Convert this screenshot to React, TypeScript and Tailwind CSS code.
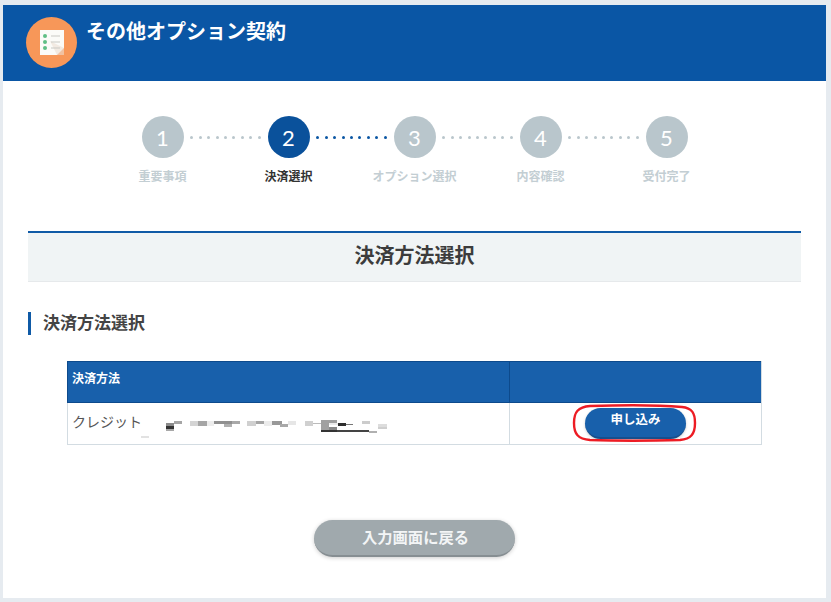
import * as React from 'react';

const font = { fontFamily: '"Lato", "Noto Sans CJK JP", sans-serif' };

const steps = [
  { no: 1, label: '重要事項' },
  { no: 2, label: '決済選択' },
  { no: 3, label: 'オプション選択' },
  { no: 4, label: '内容確認' },
  { no: 5, label: '受付完了' },
];

// mosaic covering the redacted card details
const mosaic: [number, number, number, number, string][] = [
  [166, 423, 8, 3, '#8a8a8a'], [166, 426, 8, 3, '#333333'], [166, 429, 8, 2, '#a8a8a8'], [174, 421, 8, 3, '#a5a5a5'],
  [190, 421, 8, 5, '#d4d4d4'], [198, 421, 9, 5, '#a5a5a5'], [207, 421, 7, 5, '#ededed'], [214, 421, 10, 3, '#909090'],
  [224, 421, 8, 3, '#909090'], [224, 424, 8, 3, '#b0b0b0'], [232, 421, 8, 3, '#a8a8a8'], [247, 421, 9, 5, '#d0d0d0'],
  [256, 421, 8, 3, '#a5a5a5'], [264, 421, 8, 5, '#ececec'], [272, 421, 10, 4, '#989898'], [280, 424, 8, 3, '#a8a8a8'],
  [288, 421, 8, 4, '#e6e6e6'], [305, 421, 8, 5, '#d0d0d0'], [313, 423, 8, 1, '#bbbbbb'], [321, 420, 8, 10, '#a0a0a0'],
  [329, 420, 8, 3, '#a0a0a0'], [329, 423, 9, 2, '#ececec'], [338, 423, 8, 3, '#2e2e2e'], [346, 424, 7, 1, '#777777'],
  [329, 427, 8, 3, '#8a8a8a'], [321, 430, 16, 2, '#333333'], [337, 430, 32, 2, '#444444'], [369, 431, 8, 2, '#b0b0b0'],
  [362, 421, 8, 3, '#cccccc'], [378, 424, 9, 3, '#dddddd'], [378, 427, 9, 2, '#cfcfcf'], [141, 436, 8, 2, '#e2e2e2'],
];

function Dots({ active }: { active: boolean }) {
  return (
    <div className="flex w-[84px] items-center justify-center gap-[5.4px]">
      {Array.from({ length: 9 }).map((_, i) => (
        <span
          key={i}
          className={active ? 'size-[3px] rounded-full bg-[#0a56a3]' : 'size-[3px] rounded-full bg-[#bac6cc]'}
        />
      ))}
    </div>
  );
}

function Step({ no, label, active }: { no: number; label: string; active: boolean }) {
  return (
    <div className="relative flex size-[42px] items-center justify-center">
      <div
        className={
          active
            ? 'flex size-[42px] items-center justify-center rounded-full bg-[#0a519b] text-[22px] font-normal text-white'
            : 'flex size-[42px] items-center justify-center rounded-full bg-[#b9c6cc] text-[22px] font-normal text-white'
        }
      >
        {no}
      </div>
      <span
        className={
          active
            ? 'absolute top-[53px] whitespace-nowrap text-[12px] font-bold leading-4 text-[#333333]'
            : 'absolute top-[53px] whitespace-nowrap text-[12px] font-bold leading-4 text-[#c3ced3]'
        }
      >
        {label}
      </span>
    </div>
  );
}

export default function App() {
  return (
    <div className="relative h-[602px] overflow-hidden bg-[#e6ebf0] pl-[3px] pr-[5px] pt-[5px]" style={font}>
      <div className="h-[593px] bg-white">
        {/* Header */}
        <div className="flex h-[76px] bg-[#0a56a5] pl-[23px] pt-[12px]">
          <div className="flex size-[51px] items-center justify-center rounded-full bg-[#f79759]">
            <svg width="24" height="25" viewBox="0 0 24 25">
              <path d="M0 0H24V18L17 25H0Z" fill="#fbfbf8" />
              <path d="M10 11L24 18V25H17Z" fill="#ecdfd4" opacity="0.6" />
              <circle cx="5" cy="6" r="2" fill="#5fbf85" />
              <circle cx="5" cy="12" r="2" fill="#5fbf85" />
              <circle cx="5" cy="18" r="2" fill="#5fbf85" />
              <path d="M11 6H20M11 12H20M11 18H20" stroke="#c9c9c4" strokeWidth="1" />
            </svg>
          </div>
          <h1 className="ml-[9px] mt-[1px] text-[20px] font-bold leading-[26px] text-white">その他オプション契約</h1>
        </div>

        {/* Stepper */}
        <div className="flex justify-center pt-[35px]">
          {steps.map((s, i) => (
            <React.Fragment key={s.no}>
              <Step no={s.no} label={s.label} active={s.no === 2} />
              {i < steps.length - 1 && <Dots active={s.no === 2} />}
            </React.Fragment>
          ))}
        </div>

        {/* Section title */}
        <div className="mx-[25px] mt-[73px] flex h-[51px] items-center justify-center border-b border-t-2 border-b-[#e6e9eb] border-t-[#0f5aa6] bg-[#f0f4f5] pb-[4px]">
          <h2 className="text-[20px] font-bold text-[#3c3c3c]">決済方法選択</h2>
        </div>

        <div className="mx-[25px] mt-[30px] flex h-[23px] items-center border-l-[3px] border-[#0f5aa6] pb-[2px] pl-[12px]">
          <h3 className="text-[17px] font-bold text-[#444444]">決済方法選択</h3>
        </div>

        {/* Table */}
        <div className="ml-[64px] mt-[26px] w-[695px] border-b border-l border-r border-[#d3dce2]">
          <div className="-ml-px flex h-[42px] border-b border-l border-t border-[#0d4a8c] bg-[#1860ab]">
            <div className="flex w-[442px] items-center border-r border-[#0d4a8c] pb-[6px] pl-[4px] text-[12px] font-bold text-white">
              決済方法
            </div>
            <div className="flex-1" />
          </div>
          <div className="flex h-[41px]">
            <div className="flex w-[442px] items-center border-r border-[#d3dce2] pb-[4px] pl-[4px] text-[14px] text-[#555555]">
              クレジット
            </div>
            <div className="flex flex-1 items-center justify-center">
              <button className="relative flex h-[31px] w-[101px] items-center justify-center rounded-full border-b-2 border-[#174f8c] bg-[#1860ab] pb-[4px] text-[12.5px] font-bold text-white shadow-[0_1px_3px_rgba(0,0,0,0.2)]">
                申し込み
              </button>
            </div>
          </div>
        </div>

        {/* Back button */}
        <div className="mt-[75px] flex justify-center pr-[1px]">
          <button className="h-[37px] w-[201px] rounded-full border-b-2 border-[#868e92] bg-[#a0a9ad] pl-[3px] text-[15.3px] font-bold text-[#f3f5f6] shadow-[0_1px_4px_rgba(0,0,0,0.2)]">
            入力画面に戻る
          </button>
        </div>
      </div>

      {/* Redaction mosaic and hand-drawn red ring are annotations over the screenshot */}
      <svg className="pointer-events-none absolute left-0 top-0" width="831" height="602">
        {mosaic.map(([x, y, w, h, c], i) => (
          <rect key={i} x={x} y={y} width={w} height={h} fill={c} />
        ))}
        <path
          d="M590 406C620 405 660 405 682 407C692 408 695 413 695 423C695 434 691 439 680 440C650 441 615 441 590 440C578 439 574 434 574 423C574 412 578 407 590 406Z"
          fill="none"
          stroke="#ed1c24"
          strokeWidth="2.4"
        />
      </svg>
    </div>
  );
}
